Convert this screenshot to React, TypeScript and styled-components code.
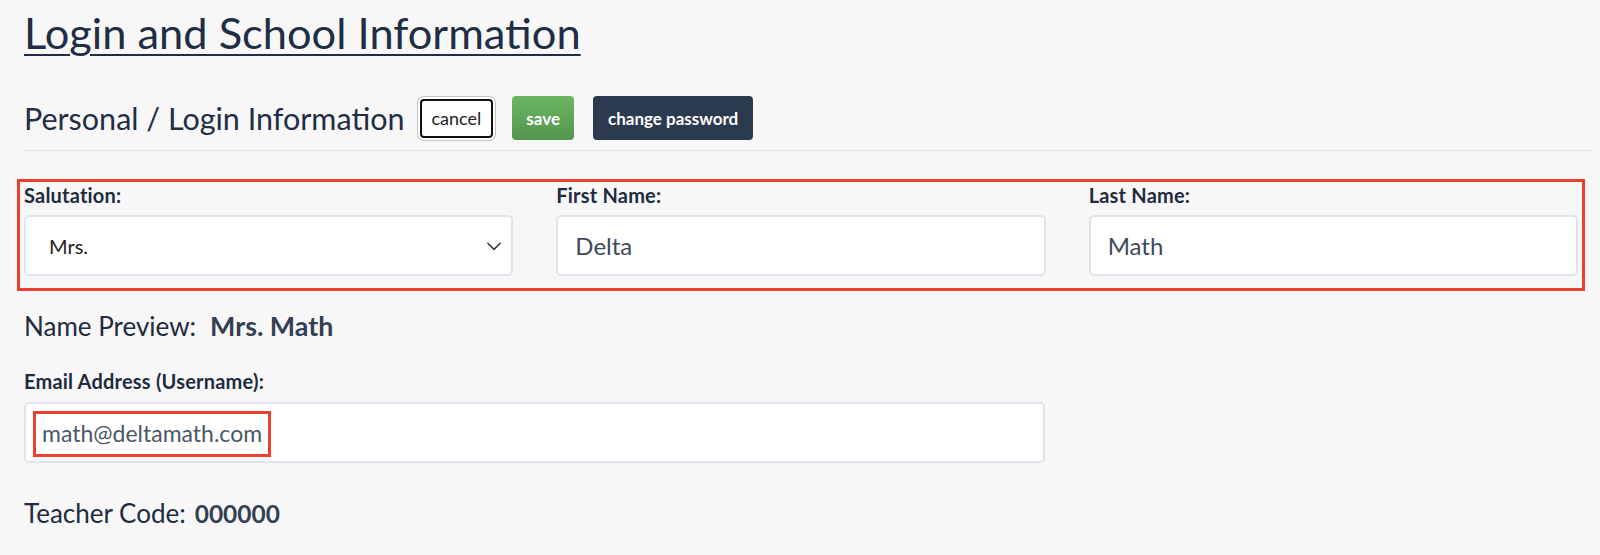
import React from 'react';
import styled, { createGlobalStyle } from 'styled-components';

const GlobalStyle = createGlobalStyle`
  html, body {
    margin: 0;
    padding: 0;
    background: #f7f7f7;
    font-family: Lato, "Open Sans", sans-serif;
    color: #1e2b40;
  }
`;

const Page = styled.div`
  padding: 1px 22px 0 24px;
  width: 1600px;
  box-sizing: border-box;
`;

const Title = styled.h1`
  margin: 0;
  font-size: 43.4px;
  font-weight: 400;
  line-height: 62px;
  color: #1f2d45;
  text-decoration: underline;
  text-decoration-thickness: 2px;
  text-underline-offset: 5px;
`;

const SectionHeader = styled.div`
  display: flex;
  align-items: center;
  gap: 19px;
  margin-top: 33px;
  padding-bottom: 10px;
  border-bottom: 1px solid #e4e4e4;
  margin-right: -14px;
`;

const SectionTitle = styled.h2`
  margin: 0 -4px 0 0;
  font-size: 30.5px;
  font-weight: 400;
  color: #1f2d45;
`;

type Variant = 'plain' | 'green' | 'dark';

const backgrounds: Record<Variant, string> = {
  plain: '#fff',
  green: 'linear-gradient(#6cb562, #53964d)',
  dark: '#2c3a50',
};

const Button = styled.button<{ $variant: Variant }>`
  font-family: Lato, sans-serif;
  font-size: ${p => (p.$variant === 'plain' ? '18px' : '17px')};
  height: ${p => (p.$variant === 'plain' ? '39px' : '44px')};
  padding: 0 ${p => (p.$variant === 'plain' ? '10px' : p.$variant === 'dark' ? '15px' : '14px')};
  border-radius: 4px;
  cursor: pointer;
  border: ${p => (p.$variant === 'plain' ? '2px solid #111' : 'none')};
  box-shadow: ${p => (p.$variant === 'plain' ? '0 0 0 2px #fff, 0 0 0 3px #c4c4c4' : 'none')};
  background: ${p => backgrounds[p.$variant]};
  color: ${p => (p.$variant === 'plain' ? '#222' : '#fff')};
  font-weight: ${p => (p.$variant === 'plain' ? 400 : 700)};
`;

const Highlight = styled.div`
  margin: 28px -7px 0 -7px;
  border: 3px solid #e8412f;
  box-sizing: border-box;
  padding: 1px 4px 12px 4px;
  display: grid;
  grid-template-columns: repeat(3, 1fr);
  column-gap: 43px;
`;

const Field = styled.div`
  display: flex;
  flex-direction: column;
`;

const Label = styled.label`
  font-size: 20px;
  font-weight: 700;
  letter-spacing: 0.2px;
  color: #1e2b40;
  line-height: 24px;
  margin-bottom: 8px;
`;

const InputBox = styled.div<{ $width?: number }>`
  height: 61px;
  width: ${p => (p.$width ? `${p.$width}px` : '100%')};
  box-sizing: border-box;
  background: #fff;
  border: 2px solid #dde4ec;
  border-radius: 5px;
  display: flex;
  align-items: center;
  padding: 0 17px;
  font-size: 24px;
  color: #3d4a5c;
`;

const SelectBox = styled(InputBox)`
  justify-content: space-between;
  padding: 0 8px 0 23px;
  font-size: 20px;
  color: #222;
`;

const InfoRow = styled.div<{ $top: number }>`
  display: flex;
  align-items: baseline;
  font-size: 26px;
  line-height: 32px;
  color: #1e2b40;
  margin-top: ${p => p.$top}px;
`;

const InfoValue = styled.span<{ $gap: number; $size?: number }>`
  margin-left: ${p => p.$gap}px;
  font-weight: 700;
  font-size: ${p => (p.$size ? `${p.$size}px` : 'inherit')};
  color: #333f52;
`;

const EmailField = styled(Field)`
  margin-top: 27px;
  & > label {
    margin-bottom: 9px;
  }
`;

const EmailText = styled.span`
  border: 3px solid #e8412f;
  padding: 6px 6px 8px 6px;
  margin: 3px 0 0 -10px;
  font-size: 23px;
  line-height: 26px;
  color: #4c5667;
`;

const Chevron = () => (
  <svg width="18" height="18" viewBox="0 0 16 16" fill="none">
    <path d="M2.5 5.5 8 11l5.5-5.5" stroke="#333" strokeWidth="1.3" strokeLinecap="round" strokeLinejoin="round" />
  </svg>
);

export default function App() {
  return (
    <>
      <GlobalStyle />
      <Page>
        <Title>Login and School Information</Title>
        <SectionHeader>
          <SectionTitle>Personal / Login Information</SectionTitle>
          <Button $variant="plain">cancel</Button>
          <Button $variant="green">save</Button>
          <Button $variant="dark">change password</Button>
        </SectionHeader>

        <Highlight>
          <Field>
            <Label>Salutation:</Label>
            <SelectBox>
              <span>Mrs.</span>
              <Chevron />
            </SelectBox>
          </Field>
          <Field>
            <Label>First Name:</Label>
            <InputBox>Delta</InputBox>
          </Field>
          <Field>
            <Label>Last Name:</Label>
            <InputBox>Math</InputBox>
          </Field>
        </Highlight>

        <InfoRow $top={19}>
          Name Preview:<InfoValue $gap={14} $size={26.8}>Mrs. Math</InfoValue>
        </InfoRow>

        <EmailField>
          <Label>Email Address (Username):</Label>
          <InputBox $width={1021}>
            <EmailText>math@deltamath.com</EmailText>
          </InputBox>
        </EmailField>

        <InfoRow $top={34}>
          Teacher Code:<InfoValue $gap={9} $size={24.5}>000000</InfoValue>
        </InfoRow>
      </Page>
    </>
  );
}
